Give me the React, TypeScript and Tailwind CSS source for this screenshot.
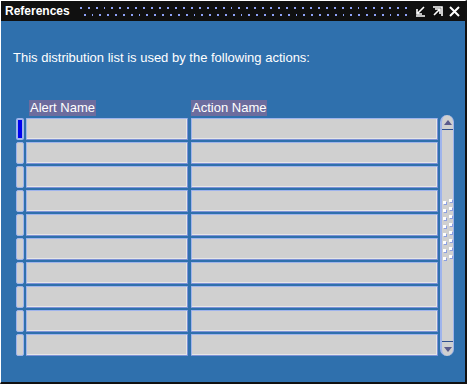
import React from "react";

const rows = Array.from({ length: 10 }, (_, i) => i);
const dots = Array.from({ length: 42 }, (_, i) => i);

const Field = ({ w }: { w: string }) => (
  <div
    className={`${w} h-[22px] bg-[#d0d0d0] border border-t-[#9fb4ec] border-l-[#9fb4ec] border-r-[#7d92d6] border-b-[#7d92d6] rounded-[1px] shadow-[inset_-1px_-1px_0_#e6e6e6]`}
  />
);

const TitleIcons = () => (
  <div className="flex items-center gap-[6px] pr-[5px]">
    <svg width="11" height="11" viewBox="0 0 11 11" className="text-white">
      <path d="M9 1 L3 7 M2 3 V8 H7 M1 10 H10" stroke="currentColor" strokeWidth="1.6" fill="none" />
    </svg>
    <svg width="11" height="11" viewBox="0 0 11 11" className="text-white">
      <path d="M1 1 H10 V10 M2 9 L7 4 M3 3 H8 V8" stroke="currentColor" strokeWidth="1.6" fill="none" />
    </svg>
    <svg width="11" height="11" viewBox="0 0 11 11" className="text-white">
      <path d="M1 1 L10 10 M10 1 L1 10" stroke="currentColor" strokeWidth="2" fill="none" />
    </svg>
  </div>
);

const DotRow = ({ offset }: { offset: string }) => (
  <div className={`flex gap-[6px] ${offset}`}>
    {dots.map((d) => (
      <div key={d} className="w-[2px] h-[2px] bg-[#8ea2f8]" />
    ))}
  </div>
);

const ScrollBar = () => (
  <div className="w-[14px] h-[241px] flex flex-col bg-[#d0d0d0] border-l-2 border-r border-[#9fb4ec] rounded-t-[7px] rounded-b-[7px] ml-[2px] -mt-[2px]">
    <div className="h-[15px] flex items-center justify-center border-b border-[#2f4f8f]">
      <svg width="8" height="5" viewBox="0 0 8 5">
        <path d="M0 5 L4 0 L8 5 Z" fill="#5a5a8c" />
      </svg>
    </div>
    <div className="flex-1 flex flex-col items-center justify-center gap-[3px] pb-[12px]">
      {Array.from({ length: 8 }, (_, i) => (
        <div key={i} className="flex gap-[3px]">
          <div className="w-[3px] h-[3px] bg-white shadow-[1px_1px_0_#8c9fe0] mt-[2px]" />
          <div className="w-[3px] h-[3px] bg-white shadow-[1px_1px_0_#8c9fe0]" />
        </div>
      ))}
    </div>
    <div className="h-[15px] flex items-center justify-center border-t border-[#2f4f8f]">
      <svg width="8" height="5" viewBox="0 0 8 5">
        <path d="M0 0 L8 0 L4 5 Z" fill="#5a5a8c" />
      </svg>
    </div>
  </div>
);

export default function App() {
  return (
    <div
      className="w-[467px] h-[384px] bg-[#2f70ad] flex flex-col border-l border-t border-l-white border-t-white border-r-2 border-b-2 border-r-[#111] border-b-[#111] overflow-hidden"
      style={{ fontFamily: '"Liberation Sans", Arial, sans-serif' }}
    >
      <div className="h-[20px] bg-[#101010] flex items-center shrink-0">
        <span className="pl-[4px] text-white font-bold text-[12px] leading-none">References</span>
        <div className="ml-[10px] mr-[8px] flex-1 h-[9px] flex flex-col justify-between overflow-hidden">
          <DotRow offset="ml-[0px]" />
          <DotRow offset="ml-[4px]" />
        </div>
        <TitleIcons />
      </div>

      <div className="pl-[12px] pt-[30px] text-white text-[13px] leading-none">
        This distribution list is used by the following actions:
      </div>

      <div className="pl-[15px] pt-[36px] flex flex-col">
        <div className="flex h-[16px] items-end">
          <div className="w-[13px]" />
          <span className="text-white text-[13px] leading-[16px] bg-[#6c6c9e] px-[1px]">Alert Name</span>
          <div className="w-[95px]" />
          <span className="text-white text-[13px] leading-[16px] bg-[#6c6c9e] px-[1px]">Action Name</span>
        </div>
        <div className="flex mt-[1px]">
          <div className="flex flex-col gap-[2px] pt-[1px]">
            {rows.map((i) => (
              <div key={i} className="flex">
                <div
                  className={`w-[8px] h-[22px] rounded-[2px] border border-[#9fb4ec] ${
                    i === 0 ? "bg-[#0000f0] border-2" : "bg-[#d0d0d0]"
                  }`}
                />
                <div className="ml-[2px]">
                  <Field w="w-[162px]" />
                </div>
                <div className="ml-[3px]">
                  <Field w="w-[247px]" />
                </div>
              </div>
            ))}
          </div>
          <ScrollBar />
        </div>
      </div>
    </div>
  );
}
